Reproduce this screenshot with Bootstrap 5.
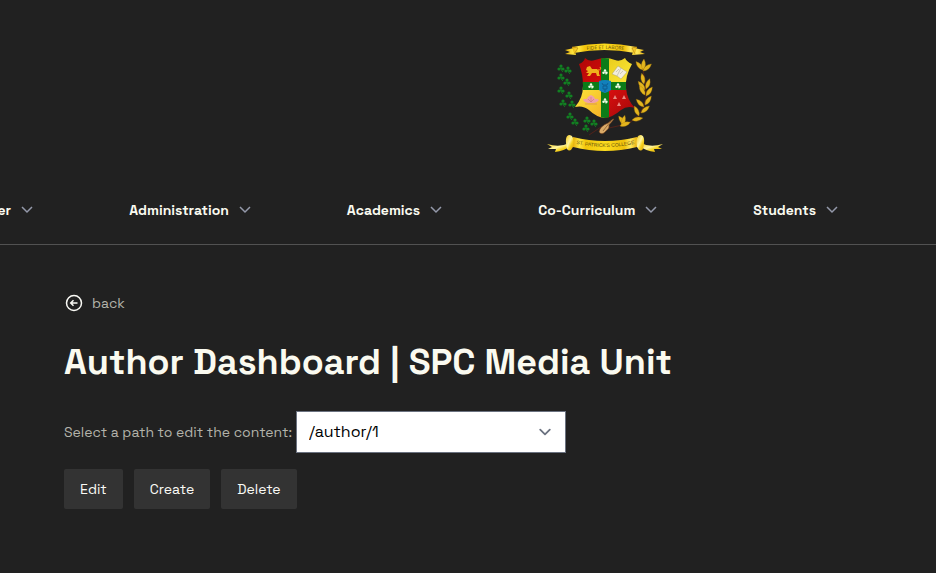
<!DOCTYPE html>
<html lang="en">
<head>
<meta charset="utf-8">
<meta name="viewport" content="width=device-width, initial-scale=1">
<title>Author Dashboard | SPC Media Unit</title>
<link href="https://cdn.jsdelivr.net/npm/bootstrap@5.3.0/dist/css/bootstrap.min.css" rel="stylesheet">
<style>
  body { background: #212121; color: #fafaf0; font-family: "Space Grotesk", Inter, "Liberation Sans", sans-serif; font-size: 14px; line-height: 20px; overflow-x: hidden; }
  .site-head { border-bottom: 1px solid #525252; padding-top: 40px; }
  .crest-row { padding-left: 274px; }
  .crest { width: 120px; height: 115px; }
  .site-nav { gap: 92px; padding: 45px 94px 24px 0; overflow: hidden; }
  .nav-item-btn { gap: 6px; color: #fafaf0; font-size: 14px; font-weight: 700; line-height: 20px; white-space: nowrap; }
  .nav-item-btn:hover { color: #fff; }
  .nav-item-btn svg { width: 20px; height: 20px; flex: none; }
  .page-main { padding: 48px 64px; }
  .back-link { color: #b3b3aa; gap: 8px; }
  .page-title { font-size: 36px; line-height: 44px; font-weight: 700; margin: 22px 0 27px; }
  .muted-label { color: #b3b3aa; }
  .path-select { width: 270px; height: 42px; border: 1px solid #6b7280; border-radius: 0; background-color: #fff; color: #000; font-size: 16px; line-height: 24px; padding: 8px 40px 8px 12px;
    background-image: url("data:image/svg+xml,%3csvg xmlns='http://www.w3.org/2000/svg' fill='none' viewBox='0 0 20 20'%3e%3cpath stroke='%236b7280' stroke-linecap='round' stroke-linejoin='round' stroke-width='1.5' d='M6 8l4 4 4-4'/%3e%3c/svg%3e"); background-position: right 8px center; background-size: 24px 24px; }
  .action-row { gap: 11px; margin-top: 16px; }
  .action-btn { background: #333; color: #fafaf5; border: 0; border-radius: 2px; font-size: 14px; line-height: 20px; padding: 10px 16px; }
  .action-btn:hover { background: #444; color: #fff; }
</style>
</head>
<body>
<header class="site-head">
  <div class="crest-row d-flex justify-content-center">
    <a href="#" aria-label="St. Patrick's College">
    <svg class="crest d-block" viewBox="0 0 120 115" aria-hidden="true">
      <defs>
        <linearGradient id="gold" x1="0" x2="1"><stop offset="0" stop-color="#e8b00c"/><stop offset=".1" stop-color="#ffe640"/><stop offset=".2" stop-color="#f2c40a"/><stop offset=".5" stop-color="#fbdc20"/><stop offset=".8" stop-color="#f0c00a"/><stop offset=".9" stop-color="#ffe95c"/><stop offset="1" stop-color="#e8b00c"/></linearGradient>
        <linearGradient id="curl" x1="0" y1="0" x2="1" y2="1"><stop offset="0" stop-color="#f3c612"/><stop offset=".45" stop-color="#fff5a0"/><stop offset=".65" stop-color="#f7d21c"/><stop offset="1" stop-color="#d69a08"/></linearGradient>
        <linearGradient id="redA" x2="1" y2="1"><stop offset="0" stop-color="#a80606"/><stop offset="1" stop-color="#d80c0c"/></linearGradient>
        <linearGradient id="redB" x2="1" y2="1"><stop offset="0" stop-color="#e01010"/><stop offset="1" stop-color="#9c0808"/></linearGradient>
        <linearGradient id="yelA" x2="1" y2="1"><stop offset="0" stop-color="#e8c91a"/><stop offset="1" stop-color="#ffee3c"/></linearGradient>
        <linearGradient id="yelB" x2="1" y2="1"><stop offset="0" stop-color="#fbea3c"/><stop offset="1" stop-color="#f5ad24"/></linearGradient>
        <clipPath id="shield"><path d="M40 18Q44 22 50 20T60 18Q65 18 70 20T80 18Q82 22 87 24Q80 36 81 48T90 68Q82 65 76 70Q68 77 60 78Q51 77 44 70Q38 65 30 67Q38 58 38 46T34 24Q39 22 40 18Z"/></clipPath>
        <g id="clover"><circle cx="0" cy="-2" r="1.6"/><circle cx="-2" cy="1" r="1.6"/><circle cx="2" cy="1" r="1.6"/><path d="M0 -2V0L-2 1M0 0L2 1M0 0Q0 3 2 4" fill="none" stroke="currentColor" stroke-width=".8"/></g>
        <path id="leaf" d="M0 0Q-4 -5 0 -11Q4 -5 0 0Z"/>
        <path id="topArc" d="M30 12Q60 6 91 12"/>
        <path id="lowArc" d="M28 103Q60 111 93 103"/>
      </defs>
      <g fill="url(#gold)">
        <path d="M29 8L20 10L25 12L20 14L31 15ZM89 8L99 10L95 12L100 14L87 15Z"/>
        <path d="M27 7Q59 0 92 7L90 13Q59 7 29 13Z"/>
      </g>
      <path d="M27 7L33 8L29 14M92 7L87 8L90 14" fill="none" stroke="#b27c08" stroke-width=".6"/>
      <text font-family="Open Sans, sans-serif" font-size="5" fill="#6c5410"><textPath href="#topArc" startOffset="50%" text-anchor="middle">FIDE ET LABORE</textPath></text>
      <g clip-path="url(#shield)">
        <path fill="url(#redA)" d="M28 16H60V46H28Z"/><path fill="url(#yelA)" d="M60 16H92V46H60Z"/>
        <path fill="url(#yelB)" d="M28 46H60V80H28Z"/><path fill="url(#redB)" d="M60 46H92V80H60Z"/>
        <path d="M56 16H64V80H56ZM28 42H92V50H28Z" fill="#0c7c18"/>
        <path d="M54 41Q60 39 66 41V50Q63 52 60 53Q56 52 54 50Z" fill="#1280bb"/>
        <path d="M57 43L58 45H62L63 43M58 46H62V49H58ZM60 49V52" fill="none" stroke="#0d5688" stroke-width=".8"/>
      </g>
      <path d="M41 30L42 27L45 26L47 29L52 29L54 31L54 34L55 36H52L51 33L47 33L45 36H42L44 33L41 33L43 31Z" fill="#f0b01c"/><path d="M53 30Q57 30 55 27" fill="none" stroke="#f0b01c"/>
      <path d="M67 34L73 26L76 28L82 32L76 39L72 36Z" fill="#f1eddc" stroke="#9b936c" stroke-width=".4"/><path d="M76 28L72 36M71 32L74 29M75 34L78 31" stroke="#8f8d7c" stroke-width=".4"/>
      <path d="M38 60Q40 58 42 59Q42 57 46 55Q50 57 50 59Q52 58 54 60Q52 63 49 63H43Q40 63 38 60Z" fill="#f0a0a8"/><path d="M46 57V62M43 59L46 62L49 59M40 64H52" fill="none" stroke="#c46c72" stroke-width=".5"/>
      <g fill="#e88880"><path d="M70 55L72 59H68ZM79 55L81 59H77ZM74 62L76 66H72Z"/></g>
      <g fill="#f2ffe8" color="#f2ffe8"><use href="#clover" transform="translate(60 32) scale(.75)"/><use href="#clover" transform="translate(46 46) scale(.75)"/><use href="#clover" transform="translate(73 46) scale(.75)"/><use href="#clover" transform="translate(60 61) scale(.75)"/></g>
      <g fill="#128022" color="#128022">
        <use href="#clover" x="16" y="28"/><use href="#clover" x="23" y="30"/><use href="#clover" x="16" y="37"/><use href="#clover" x="22" y="42"/><use href="#clover" x="16" y="50"/><use href="#clover" x="24" y="55"/><use href="#clover" x="18" y="63"/><use href="#clover" x="27" y="64"/><use href="#clover" x="25" y="76"/><use href="#clover" x="30" y="82"/><use href="#clover" x="42" y="80"/><use href="#clover" x="49" y="83"/><use href="#clover" x="41" y="88"/>
      </g>
      <path d="M44 95L56 87M64 88Q74 86 84 83Q98 75 101 58Q101 42 98 31" fill="none" stroke="#602218" stroke-width=".8"/>
      <g fill="#e3b51e" stroke="#a97a08" stroke-width=".3">
        <use href="#leaf" transform="translate(98 30) rotate(-40)"/><use href="#leaf" transform="translate(98 30) rotate(5)"/><use href="#leaf" transform="translate(98 31) rotate(50)"/>
        <use href="#leaf" transform="translate(99 44) rotate(-12)"/><use href="#leaf" transform="translate(100 50) rotate(-38)"/><use href="#leaf" transform="translate(101 49) rotate(20)"/><use href="#leaf" transform="translate(101 56) rotate(35)"/>
        <use href="#leaf" transform="translate(100 55) rotate(-30)"/><use href="#leaf" transform="translate(100 65) rotate(35)"/><use href="#leaf" transform="translate(99 67) rotate(-45)"/><use href="#leaf" transform="translate(96 73) rotate(50)"/>
        <use href="#leaf" transform="translate(94 76) rotate(-25)"/><use href="#leaf" transform="translate(87 80) rotate(80)"/><use href="#leaf" transform="translate(80 85) rotate(-35)"/><use href="#leaf" transform="translate(77 86) rotate(15)"/><use href="#leaf" transform="translate(75 86) rotate(70)"/>
      </g>
      <path d="M68 79L63 83Q55 86 54 92Q57 96 61 91Q65 88 64 85L69 79Z" fill="#d9aa68" stroke="#6b3715" stroke-width=".6"/><path d="M58 91L66 81" stroke="#704016" stroke-width=".6"/>
      <path fill="url(#gold)" d="M28 97Q60 105 92 97V107Q60 115 28 107Z"/>
      <g fill="url(#curl)">
        <path d="M24 103Q15 108 2 104L7 107L3 109L11 109L10 112Q19 111 26 106Z"/>
        <path d="M28 107Q25 113 22 109Q19 96 24 95Q30 95 28 107Z"/>
        <path d="M96 103Q105 108 118 104L113 107L117 109L109 109L110 112Q101 111 94 106Z"/>
        <path d="M92 107Q95 113 98 109Q101 96 96 95Q90 95 92 107Z"/>
      </g>
      <text font-family="Liberation Sans, sans-serif" font-size="5" fill="#665410"><textPath href="#lowArc" startOffset="50%" text-anchor="middle">ST. PATRICK'S COLLEGE</textPath></text>
    </svg>
    </a>
  </div>
  <svg class="d-none"><symbol id="chev" viewBox="0 0 20 20"><path d="M5 7L10 12L15 7" fill="none" stroke="#9499aa" stroke-width="1.5"/></symbol></svg>
  <nav class="site-nav d-flex justify-content-end" aria-label="Main">
    <button type="button" class="nav-item-btn btn p-0 border-0 d-flex align-items-center">er<svg aria-hidden="true"><use href="#chev"/></svg></button>
    <button type="button" class="nav-item-btn btn p-0 border-0 d-flex align-items-center">Administration<svg aria-hidden="true"><use href="#chev"/></svg></button>
    <button type="button" class="nav-item-btn btn p-0 border-0 d-flex align-items-center">Academics<svg aria-hidden="true"><use href="#chev"/></svg></button>
    <button type="button" class="nav-item-btn btn p-0 border-0 d-flex align-items-center">Co-Curriculum<svg aria-hidden="true"><use href="#chev"/></svg></button>
    <button type="button" class="nav-item-btn btn p-0 border-0 d-flex align-items-center">Students<svg aria-hidden="true"><use href="#chev"/></svg></button>
  </nav>
</header>
<main class="page-main">
  <a href="#" class="back-link d-inline-flex align-items-center text-decoration-none">
    <svg width="20" height="20" viewBox="0 0 20 20" fill="none" stroke="#fafaf5" stroke-width="1.5" aria-hidden="true"><circle cx="10" cy="10" r="7.5"/><path d="M13.5 10H7M9.5 7.2L6.7 10L9.5 12.8"/></svg>back</a>
  <h1 class="page-title">Author Dashboard | SPC Media Unit</h1>
  <form>
    <div class="d-flex flex-wrap align-items-center gap-1">
      <label class="muted-label" for="path">Select a path to edit the content:</label>
      <select class="path-select form-select" id="path"><option>/author/1</option></select>
    </div>
    <div class="action-row d-flex flex-wrap">
      <button type="button" class="action-btn btn">Edit</button>
      <button type="button" class="action-btn btn">Create</button>
      <button type="button" class="action-btn btn">Delete</button>
    </div>
  </form>
</main>
<script src="https://cdn.jsdelivr.net/npm/bootstrap@5.3.0/dist/js/bootstrap.bundle.min.js"></script>
</body>
</html>
